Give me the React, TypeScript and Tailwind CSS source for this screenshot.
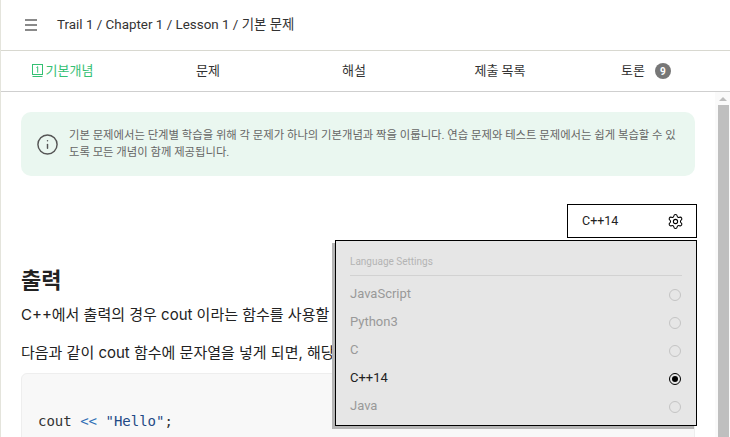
import { Info, Settings } from "lucide-react";

const sans = "font-['Roboto','Noto_Sans_CJK_KR',sans-serif]";

const languages = [
  { name: "JavaScript", selected: false },
  { name: "Python3", selected: false },
  { name: "C", selected: false },
  { name: "C++14", selected: true },
  { name: "Java", selected: false },
];

function BookIcon() {
  return (
    <svg width="11" height="14" viewBox="0 0 11 14" fill="none" stroke="#34c073" strokeWidth="1">
      <rect x="0.5" y="0.5" width="10" height="10" />
      <path d="M0.5 12.5h10" />
      <path d="M4.5 3.5l1.2-0.8v6" />
    </svg>
  );
}

export default function App() {
  return (
    <div className={`${sans} h-[437px] w-[730px] overflow-hidden bg-white border-l border-[#e4e4dc] text-[#222] flex flex-col`}>
      {/* 상단 헤더 */}
      <header className="h-[51px] shrink-0 border-b border-[#d8d8d0] flex items-center pl-[24px] gap-[20px]">
        <div className="w-[12px] flex flex-col gap-[3px]">
          <div className="h-[2px] bg-[#8a8a8a]" />
          <div className="h-[2px] bg-[#8a8a8a]" />
          <div className="h-[2px] bg-[#8a8a8a]" />
        </div>
        <span className="text-[13.4px] text-[#333]">Trail 1 / Chapter 1 / Lesson 1 / 기본 문제</span>
      </header>

      {/* 탭 */}
      <nav className="h-[41px] shrink-0 border-b border-[#cfcfcf] flex items-center text-[13px] text-[#333]">
        <div className="w-[134px] pl-[1px] pr-[12px] flex items-center justify-center gap-[3px] text-[#34c073]">
          <BookIcon />
          <span>기본개념</span>
        </div>
        <div className="w-[146px] text-center">문제</div>
        <div className="w-[146px] text-center">해설</div>
        <div className="w-[146px] text-center">제출 목록</div>
        <div className="w-[146px] flex items-center justify-center gap-[10px]">
          <span>토론</span>
          <span className="w-[16px] h-[16px] rounded-full bg-[#777] text-white text-[10px] font-bold flex items-center justify-center">9</span>
        </div>
      </nav>

      <div className="flex-1 flex min-h-0">
        <main className="relative flex-1 min-w-0 overflow-hidden px-[20px] pt-[20px]">
          <div className="h-[64px] rounded-[10px] bg-[#eaf7f0] flex items-center pl-[15px] pr-[12px] gap-[10px]">
            <Info className="w-[23px] h-[23px] shrink-0 text-[#555]" strokeWidth={1.5} />
            <p className="text-[11.35px] leading-[17px] text-[#666]">
              기본 문제에서는 단계별 학습을 위해 각 문제가 하나의 기본개념과 짝을 이룹니다. 연습 문제와 테스트 문제에서는 쉽게 복습할 수 있<br />도록 모든 개념이 함께 제공됩니다.
            </p>
          </div>

          <div className="mt-[28px] -mr-[2px] flex justify-end">
            <div className="w-[130px] h-[34px] border border-black flex items-center justify-between pl-[14px] pr-[12px] text-[12.5px] text-[#222]">
              <span>C++14</span>
              <Settings className="w-[17px] h-[17px] text-black" strokeWidth={1.5} />
            </div>
          </div>

          <h2 className="mt-[27px] text-[22px] leading-[32px] font-bold text-[#222]">출력</h2>
          <p className="mt-[8px] font-['Inter','Noto_Sans_CJK_KR',sans-serif] text-[15px] leading-[20px] whitespace-nowrap">C++에서 출력의 경우 cout 이라는 함수를 사용할 수 있습니다.</p>
          <p className="mt-[18px] font-['Inter','Noto_Sans_CJK_KR',sans-serif] text-[15px] leading-[20px] whitespace-nowrap">다음과 같이 cout 함수에 문자열을 넣게 되면, 해당 문자열이 출력됩니다.</p>

          <div className="mt-[10px] h-[120px] rounded-[6px] border border-[#eeeeee] bg-[#f8f8f8] pl-[16px] pt-[37px] font-['DejaVu_Sans_Mono',monospace] text-[14px] leading-[20px] text-[#333]">
            cout <span className="text-[#2f6fb5]">&lt;&lt;</span> <span className="text-[#1f4a86]">"Hello"</span>;
          </div>

          {/* 언어 설정 드롭다운 */}
          <div className="absolute left-[334px] top-[148px] w-[362px] h-[186px] border border-black bg-[#e6e6e6] shadow-[-3px_3px_0_0_#b5b5b5] px-[14px]">
            <div className="h-[35px] border-b border-[#d2d2d2] flex items-center pt-[6px] text-[10px] text-[#b4b4b4]">Language Settings</div>
            <div className="pt-[4px]">
              {languages.map((lang) => (
                <div key={lang.name} className={`h-[28px] flex items-center justify-between text-[13px] ${lang.selected ? "text-[#222]" : "text-[#999]"}`}>
                  <span>{lang.name}</span>
                  {lang.selected ? (
                    <span className="w-[12px] h-[12px] mr-[1px] mt-[2px] rounded-full border border-black flex items-center justify-center">
                      <span className="w-[6px] h-[6px] rounded-full bg-black" />
                    </span>
                  ) : (
                    <span className="w-[12px] h-[12px] mr-[1px] mt-[2px] rounded-full border border-[#c4c4c4]" />
                  )}
                </div>
              ))}
            </div>
          </div>
        </main>

        {/* 스크롤바 */}
        <div className="w-[15px] shrink-0 bg-[#fafafa] flex flex-col items-center pt-[5px] pl-[1px]">
          <div className="w-0 h-0 border-x-[4px] border-x-transparent border-b-[4px] border-b-[#bdbdbd]" />
          <div className="mt-[4px] w-[11px] flex-1 bg-[#bfbfbf]" />
        </div>
      </div>
    </div>
  );
}
